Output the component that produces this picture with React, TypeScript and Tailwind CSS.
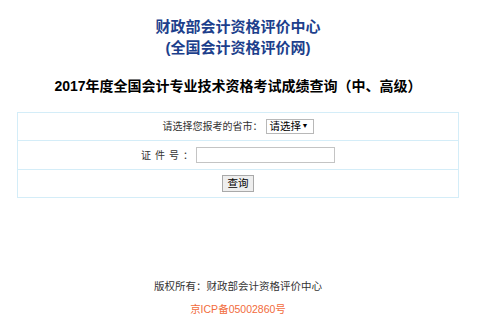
import React from 'react'

const font = { fontFamily: '"Liberation Sans", "Noto Sans CJK SC", sans-serif' }

export default function App() {
  return (
    <div className="w-[500px] h-[323px] bg-white overflow-hidden" style={font}>
      <div className="w-[476px]">
        <div className="pt-[16px] text-center text-[15px] font-bold leading-[21px] text-[#1d3f8c]">
          <div>财政部会计资格评价中心</div>
          <div>(全国会计资格评价网)</div>
        </div>
        <h1 className="mt-[18px] text-center text-[14px] font-bold leading-[20px] text-black">
          2017年度全国会计专业技术资格考试成绩查询（中、高级）
        </h1>
        <table className="mx-[17px] mt-[16px] w-[442px] border-collapse text-[10px] text-[#333]">
          <tbody>
            <tr className="h-[28px]">
              <td className="border border-[#d4edf8] text-center">
                <span className="inline-flex items-center whitespace-nowrap">
                  请选择您报考的省市：
                  <span className="ml-[3px] inline-flex h-[15px] w-[48px] items-center justify-between whitespace-nowrap border border-[#b8b8b8] bg-white pl-[3px] pr-[4px] text-[10.5px] text-black">
                    <span>请选择</span>
                    <span className="text-[7px]">▼</span>
                  </span>
                </span>
              </td>
            </tr>
            <tr className="h-[29px]">
              <td className="border border-[#d4edf8] text-center">
                <span className="inline-flex items-center whitespace-nowrap">
                  <span className="tracking-[4px]">证件号</span>：
                  <span className="ml-[3px] inline-block h-[16px] w-[139px] border border-[#c4c4c4] bg-white"></span>
                </span>
              </td>
            </tr>
            <tr className="h-[28px]">
              <td className="border border-[#d4edf8] text-center">
                <button className="inline-flex h-[17px] w-[32px] items-center justify-center border border-[#a9a9a9] bg-[#eeeeee] text-[10.5px] text-black">
                  查询
                </button>
              </td>
            </tr>
          </tbody>
        </table>
        <div className="mt-[80px] text-center text-[10.5px] leading-[16px] text-[#333]">
          版权所有：财政部会计资格评价中心
        </div>
        <div className="mt-[7px] text-center text-[10.5px] leading-[16px] text-[#f26c3c]">
          京ICP备05002860号
        </div>
      </div>
    </div>
  )
}
